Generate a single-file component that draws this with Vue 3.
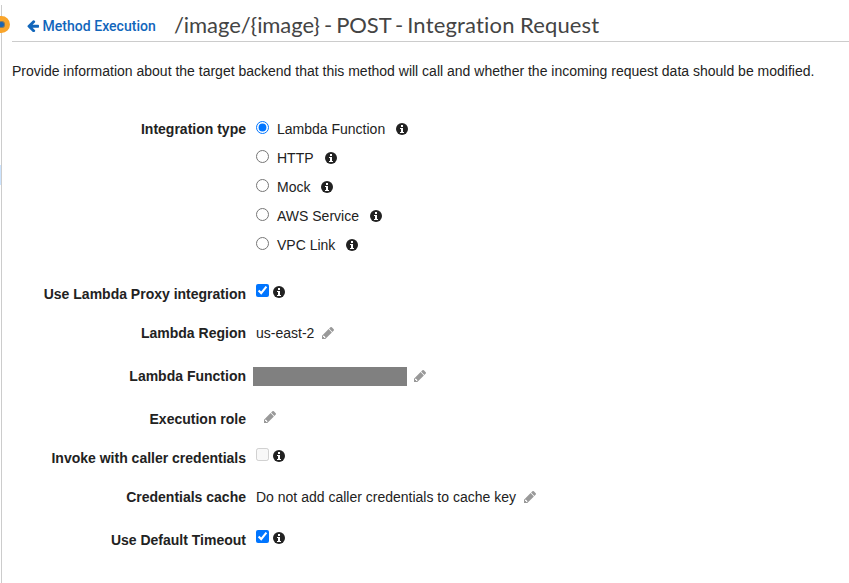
<script setup>
import { h } from 'vue'

const PENCIL =
  'M491 1536l91-91-235-235-91 91v107h128v128h107zM960 416l416 416-832 832h-416v-416zM1643 512q0 53-37 90l-166 166-416-416 166-165q36-38 90-38 53 0 91 38l235 234q37 39 37 91z'

const InfoIcon = () => h('svg', { viewBox: '0 0 12 12' }, [
  h('circle', { cx: 6, cy: 6, r: 6 }),
  h('path', { d: 'M5 2h2v2H5zM4 5h3v4h1v1H4V9h1V6H4z', fill: '#fff' }),
])
const PencilIcon = () => h('svg', { viewBox: '128 149 1515 1515' }, [h('path', { d: PENCIL })])

const types = ['Lambda Function', 'HTTP', 'Mock', 'AWS Service', 'VPC Link']
</script>

<template>
  <div class="page">
    <span class="tree-highlight"></span>
    <span class="marker"></span>
    <main class="panel">
      <header class="head">
        <a class="back">
          <svg class="arrow" viewBox="128 180 1536 1500"><path d="M1664 896v128q0 53-32.5 90.5t-84.5 37.5h-704l293 294q38 36 38 90t-38 90l-75 76q-37 37-90 37-52 0-91-37l-651-652q-37-37-37-90 0-52 37-91l651-650q38-38 91-38 52 0 90 38l75 74q38 38 38 91t-38 91l-293 293h704q52 0 84.5 37.5t32.5 90.5z" /></svg>
          <span>Method Execution</span>
        </a>
        <h1 class="title"><span class="path">/image/{image} - POST - </span><span class="step">Integration Request</span></h1>
      </header>
      <p class="intro">Provide information about the target backend that this method will call and whether the incoming request data should be modified.</p>
      <div class="form">
        <div class="row">
          <div class="label">Integration type</div>
          <div class="options">
            <label v-for="(t, i) in types" :key="t" class="option">
              <input type="radio" name="type" class="box" :checked="i === 0" />
              <span class="option-text">{{ t }}</span>
              <InfoIcon class="info" />
            </label>
          </div>
        </div>
        <div class="row proxy">
          <div class="label">Use Lambda Proxy integration</div>
          <div class="value checks"><input type="checkbox" class="box" checked /><InfoIcon class="info" /></div>
        </div>
        <div class="row near">
          <div class="label">Lambda Region</div>
          <div class="value"><span>us-east-2</span><PencilIcon class="pencil" /></div>
        </div>
        <div class="row">
          <div class="label">Lambda Function</div>
          <div class="value"><span class="redacted"></span><PencilIcon class="pencil after-redacted" /></div>
        </div>
        <div class="row">
          <div class="label">Execution role</div>
          <div class="value role"><PencilIcon class="pencil" /></div>
        </div>
        <div class="row near">
          <div class="label">Invoke with caller credentials</div>
          <div class="value checks"><input type="checkbox" class="box" disabled /><InfoIcon class="info" /></div>
        </div>
        <div class="row near">
          <div class="label">Credentials cache</div>
          <div class="value"><span>Do not add caller credentials to cache key</span><PencilIcon class="pencil" /></div>
        </div>
        <div class="row">
          <div class="label">Use Default Timeout</div>
          <div class="value checks"><input type="checkbox" class="box" checked /><InfoIcon class="info" /></div>
        </div>
      </div>
    </main>
  </div>
</template>

<style>
body {
  background: #fff;
}
</style>

<style scoped>
.page {
  position: relative;
  box-sizing: border-box;
  height: 583px;
  padding: 5px 0 0 1px;
  overflow: hidden;
  font-family: "Liberation Sans", Arial, sans-serif;
  font-size: 14px;
  line-height: 20px;
  color: #222;
}
.panel {
  box-sizing: border-box;
  height: 578px;
  padding-left: 10px;
  border-left: 1px solid #ccc;
}
.marker {
  position: absolute;
  left: -7px;
  top: 16px;
  box-sizing: border-box;
  width: 17px;
  height: 17px;
  border: 5px solid #f9a52b;
  border-radius: 50%;
  background: #1a64b5;
  box-shadow: inset 0 0 0 1px #8b7b5b;
}
.tree-highlight {
  position: absolute;
  left: 0;
  top: 165px;
  width: 1px;
  height: 20px;
  background: #cce4ff;
}
.head {
  display: flex;
  box-sizing: border-box;
  height: 37px;
  padding: 4px 0 0 15px;
  border-bottom: 1px solid #ccc;
}
.back {
  display: flex;
  gap: 3.5px;
  height: 34px;
  align-items: center;
  width: 147px;
  flex: none;
  font: 500 14px/32px Roboto, sans-serif;
  letter-spacing: 0.03px;
  color: #1166bb;
  white-space: nowrap;
}
.arrow {
  width: 12px;
  height: 12px;
  fill: currentColor;
}
.title {
  margin: 0;
  font: 400 22px/32px Lato, sans-serif;
  font-variant-ligatures: none;
  color: #444;
  white-space: nowrap;
}
.path {
  letter-spacing: -0.07px;
  word-spacing: -1.5px;
}
.step {
  letter-spacing: 0.17px;
  word-spacing: -0.5px;
}
.intro {
  margin: 19px 0 38px;
  white-space: nowrap;
}
.form {
  display: flex;
  flex-direction: column;
  gap: 23px;
}
.row {
  display: grid;
  grid-template-columns: 234px auto;
  column-gap: 10px;
}
.near {
  margin-top: -4px;
}
.proxy {
  margin-top: 6px;
}
.label {
  font-weight: 700;
  text-align: right;
  white-space: nowrap;
}
.options {
  display: flex;
  flex-direction: column;
  gap: 9px;
}
.option,
.value {
  display: flex;
  align-items: center;
  height: 20px;
  white-space: nowrap;
}
.box {
  flex: none;
  width: 13px;
  height: 13px;
  margin: 0 8px 3px 0;
}
.info {
  flex: none;
  width: 12px;
  height: 12px;
  fill: #222;
}
.option .info {
  margin-left: 11px;
}
.checks {
  padding-bottom: 7px;
  height: 13px;
}
.checks .box {
  margin: 0 4px 0 0;
}
.checks .info {
  margin-top: 3px;
}
.pencil {
  flex: none;
  width: 12px;
  height: 12px;
  margin-left: 8px;
  fill: #999;
}
.redacted {
  width: 154px;
  height: 19px;
  margin-left: -3px;
  background: #808080;
}
.after-redacted {
  margin-left: 7px;
}
.role {
  height: 16px;
}
</style>
